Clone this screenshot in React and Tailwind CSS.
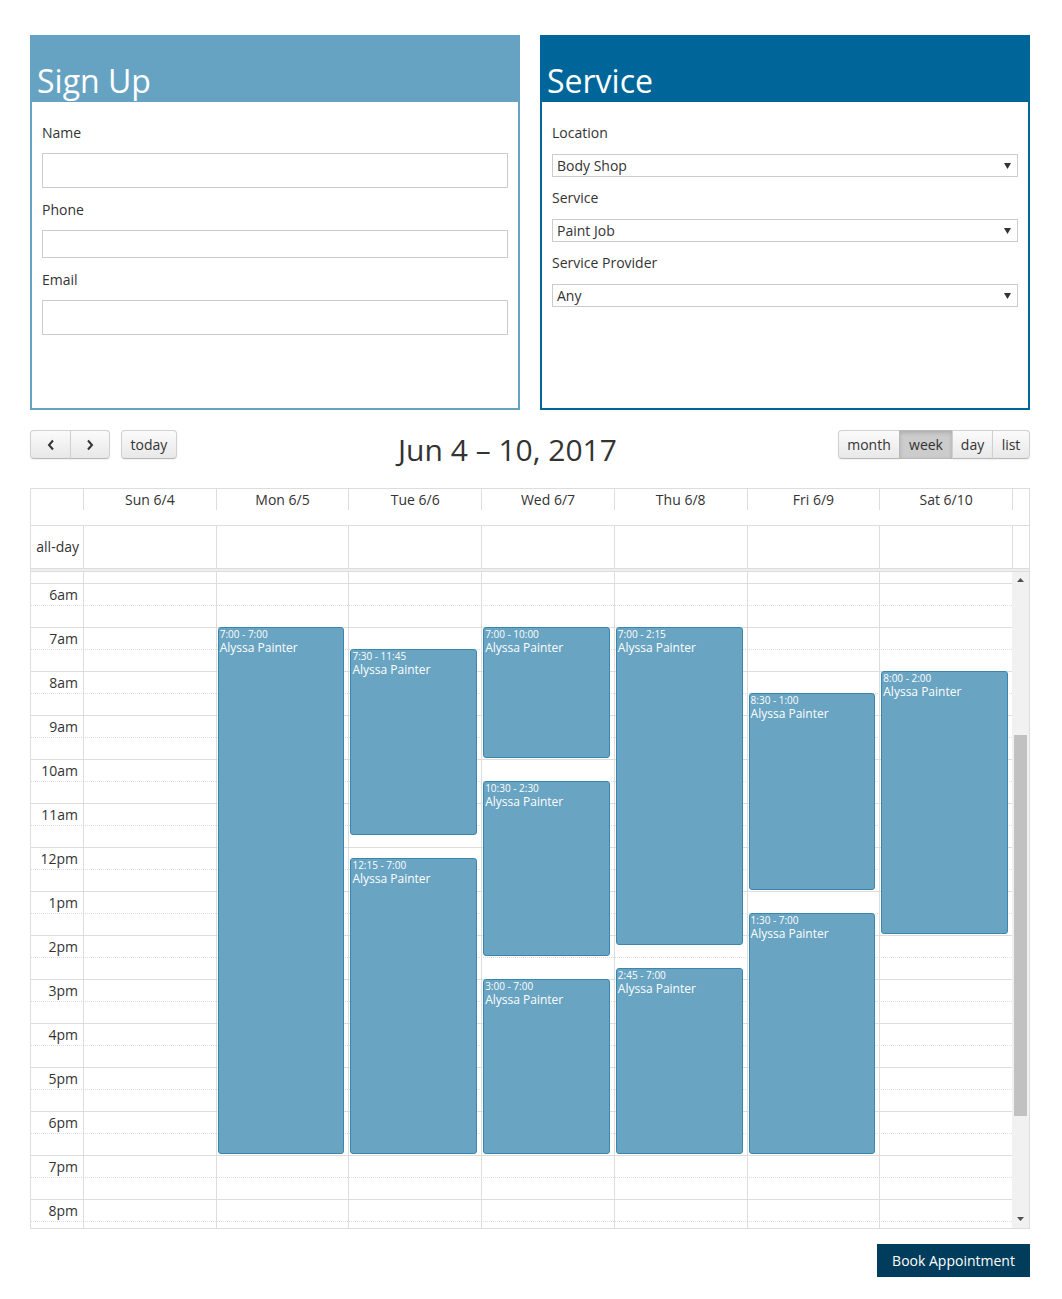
import React from 'react'

const days = ['Sun 6/4', 'Mon 6/5', 'Tue 6/6', 'Wed 6/7', 'Thu 6/8', 'Fri 6/9', 'Sat 6/10']

// start / end in hours (24h)
const events = [
  { day: 1, start: 7, end: 19, time: '7:00 - 7:00' },
  { day: 2, start: 7.5, end: 11.75, time: '7:30 - 11:45' },
  { day: 2, start: 12.25, end: 19, time: '12:15 - 7:00' },
  { day: 3, start: 7, end: 10, time: '7:00 - 10:00' },
  { day: 3, start: 10.5, end: 14.5, time: '10:30 - 2:30' },
  { day: 3, start: 15, end: 19, time: '3:00 - 7:00' },
  { day: 4, start: 7, end: 14.25, time: '7:00 - 2:15' },
  { day: 4, start: 14.75, end: 19, time: '2:45 - 7:00' },
  { day: 5, start: 8.5, end: 13, time: '8:30 - 1:00' },
  { day: 5, start: 13.5, end: 19, time: '1:30 - 7:00' },
  { day: 6, start: 8, end: 14, time: '8:00 - 2:00' },
]

const FIRST_SLOT = 5.5
const SLOT_H = 22

// 5:30 .. 8:30pm
const slots = Array.from({ length: 31 }, (_, i) => FIRST_SLOT + i * 0.5)

const hourLabel = h => {
  if (h === 12) return '12pm'
  return h < 12 ? `${h}am` : `${h - 12}pm`
}

const btnBase =
  'h-[29px] border border-[#d0d0d0] border-b-[#b8b8b8] bg-gradient-to-b from-[#fbfbfb] to-[#e8e8e8] text-[#333] text-[14px] shadow-[0_1px_2px_rgba(0,0,0,0.06)] flex items-center justify-center'

function Chevron({ dir }) {
  return (
    <svg width="8" height="12" viewBox="0 0 8 12">
      <polyline
        points={dir === 'left' ? '6,1.5 2,6 6,10.5' : '2,1.5 6,6 2,10.5'}
        fill="none"
        stroke="#333"
        strokeWidth="2"
      />
    </svg>
  )
}

function Select({ value }) {
  return (
    <div className="h-[23px] border border-[#ccc] flex items-center justify-between pl-[4px] pr-[6px] text-[14px] text-[#333] mb-[11px]">
      <span>{value}</span>
      <svg width="7" height="6" viewBox="0 0 7 6">
        <polygon points="0,0 7,0 3.5,6" fill="#333" />
      </svg>
    </div>
  )
}

function SignUp() {
  return (
    <div className="h-[375px] border-2 border-[#66a3c3] bg-white">
      <div className="h-[65px] bg-[#66a3c3] flex items-end pl-[5px] pb-[5px]">
        <h1 className="text-white text-[32px] leading-[32px]">Sign Up</h1>
      </div>
      <div className="px-[10px] pt-[21px] text-[14px] text-[#333]">
        <div className="h-5 leading-5 mb-[10px]">Name</div>
        <div className="h-[35px] border border-[#ccc] mb-[12px]" />
        <div className="h-5 leading-5 mb-[10px]">Phone</div>
        <div className="h-[28px] border border-[#ccc] mb-[12px]" />
        <div className="h-5 leading-5 mb-[10px]">Email</div>
        <div className="h-[35px] border border-[#ccc]" />
      </div>
    </div>
  )
}

function Service() {
  return (
    <div className="h-[375px] border-2 border-[#006699] bg-white">
      <div className="h-[65px] bg-[#006699] flex items-end pl-[5px] pb-[5px]">
        <h1 className="text-white text-[32px] leading-[32px]">Service</h1>
      </div>
      <div className="px-[10px] pt-[21px] text-[14px] text-[#333]">
        <div className="h-5 leading-5 mb-[11px]">Location</div>
        <Select value="Body Shop" />
        <div className="h-5 leading-5 mb-[11px]">Service</div>
        <Select value="Paint Job" />
        <div className="h-5 leading-5 mb-[11px]">Service Provider</div>
        <Select value="Any" />
      </div>
    </div>
  )
}

function Toolbar() {
  return (
    <div className="mt-[20px] h-[58px] flex items-start">
      <div className="flex items-start gap-[11px]">
        <div className="flex">
          <button className={`${btnBase} w-[41px] rounded-l-[4px]`}>
            <Chevron dir="left" />
          </button>
          <button className={`${btnBase} w-[40px] -ml-px rounded-r-[4px]`}>
            <Chevron dir="right" />
          </button>
        </div>
        <button className={`${btnBase} w-[56px] rounded-[4px]`}>today</button>
      </div>
      <h2 className="flex-1 text-center text-[30px] leading-[30px] mt-[5px] text-[#333]">
        Jun 4 – 10, 2017
      </h2>
      <div className="flex">
        <button className={`${btnBase} w-[62px] rounded-l-[4px]`}>month</button>
        <button className="h-[29px] w-[54px] -ml-px border border-[#b8b8b8] bg-[#cccccc] text-[#333] text-[14px] shadow-[inset_0_2px_4px_rgba(0,0,0,0.15)] flex items-center justify-center">
          week
        </button>
        <button className={`${btnBase} w-[41px] -ml-px`}>day</button>
        <button className={`${btnBase} w-[38px] -ml-px rounded-r-[4px]`}>list</button>
      </div>
    </div>
  )
}

function Calendar() {
  return (
    <div className="border border-[#ddd] text-[14px] text-[#333]">
      {/* day headers */}
      <div className="grid grid-cols-[52px_repeat(7,minmax(0,1fr))_17px] h-[21px]">
        <div />
        {days.map(d => (
          <div key={d} className="border-l border-[#ddd] text-center leading-[21px]">
            {d}
          </div>
        ))}
        <div className="border-l border-[#ddd]" />
      </div>
      <div className="h-[15px]" />

      {/* all-day */}
      <div className="grid grid-cols-[52px_repeat(7,minmax(0,1fr))_17px] h-[43px] border-t border-[#ddd]">
        <div className="text-right pr-[4px] leading-[42px]">all-day</div>
        {days.map(d => (
          <div key={d} className="border-l border-[#ddd]" />
        ))}
        <div className="border-l border-[#ddd]" />
      </div>
      <div className="h-[2px] bg-[#eee] border-y border-[#ddd] box-content" />

      {/* time grid */}
      <div className="flex h-[656px]">
        <div className="flex-1 relative overflow-hidden">
          <div className="-mt-[11px]">
            {slots.map(s => {
              const onHour = s % 1 === 0
              return (
                <div
                  key={s}
                  className={`h-[22px] border-t border-[#ddd] flex ${onHour ? 'border-solid' : 'border-dotted'}`}
                >
                  <div className="w-[52px] text-right pr-[5px] leading-[21px]">
                    {onHour ? hourLabel(s) : ''}
                  </div>
                </div>
              )
            })}
          </div>
          <div className="absolute inset-0 -top-[11px] grid grid-cols-[52px_repeat(7,minmax(0,1fr))]">
            <div />
            {days.map((d, i) => (
              <div key={d} className="border-l border-[#ddd] relative">
                {events
                  .filter(e => e.day === i)
                  .map(e => (
                    <div
                      key={e.time}
                      className="absolute left-[1px] right-[4px] bg-[#69a4c2] border border-[#3a87ad] rounded-[3px] text-white px-[1px] overflow-hidden"
                      style={{
                        top: (e.start - FIRST_SLOT) * 2 * SLOT_H,
                        height: (e.end - e.start) * 2 * SLOT_H - 1,
                      }}
                    >
                      <div className="text-[10px] leading-[12px]">{e.time}</div>
                      <div className="text-[12px] leading-[16px]">Alyssa Painter</div>
                    </div>
                  ))}
              </div>
            ))}
          </div>
        </div>

        {/* scrollbar */}
        <div className="w-[17px] bg-[#f1f1f1] flex flex-col items-center">
          <svg width="7" height="4" viewBox="0 0 7 4" className="mt-[6px]">
            <polygon points="3.5,0 7,4 0,4" fill="#505050" />
          </svg>
          <div className="w-[13px] h-[381px] bg-[#c1c1c1] mt-[153px]" />
          <div className="flex-1" />
          <svg width="7" height="4" viewBox="0 0 7 4" className="mb-[7px]">
            <polygon points="0,0 7,0 3.5,4" fill="#505050" />
          </svg>
        </div>
      </div>
    </div>
  )
}

export default function App() {
  return (
    <div className="min-h-screen bg-white font-['Open_Sans',sans-serif]">
      <div className="w-[1000px] ml-[30px] pt-[35px] pb-[22px]">
        <div className="grid grid-cols-2 gap-[20px]">
          <SignUp />
          <Service />
        </div>
        <Toolbar />
        <Calendar />
        <div className="flex justify-end mt-[15px]">
          <button className="w-[153px] h-[33px] bg-[#003d5c] text-white text-[14px]">
            Book Appointment
          </button>
        </div>
      </div>
    </div>
  )
}
